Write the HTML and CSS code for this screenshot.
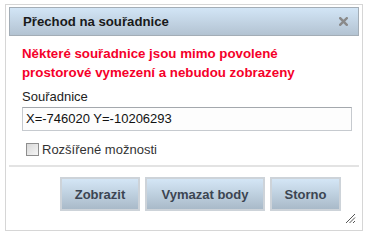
FILE: index.html
```html
<!DOCTYPE html>
<html lang="cs">
<head>
<meta charset="utf-8">
<title>Přechod na souřadnice</title>
<link rel="stylesheet" href="styles.css">
</head>
<body>
<div class="dialog">
  <div class="titlebar">
    <span class="title">Přechod na souřadnice</span>
    <span class="close"><svg width="9" height="9" viewBox="0 0 9 9"><path d="M1.2 1.2 L7.8 7.8 M7.8 1.2 L1.2 7.8" stroke="#8a8a8a" stroke-width="2.4" stroke-linecap="square"/></svg></span>
  </div>
  <div class="content">
    <p class="warn">Některé souřadnice jsou mimo povolené<br>prostorové vymezení a nebudou zobrazeny</p>
    <div class="lbl">Souřadnice</div>
    <div class="coords">X=-746020 Y=-10206293</div>
    <div class="chk"><span class="box"></span><span>Rozšířené možnosti</span></div>
  </div>
  <div class="buttons">
    <span class="btn btn-show">Zobrazit</span>
    <span class="btn btn-clear">Vymazat body</span>
    <span class="btn btn-cancel">Storno</span>
  </div>
  <span class="grip"><svg width="11" height="11" viewBox="0 0 11 11"><path d="M10 1 L1 10 M10 4.5 L4.5 10 M10 8 L8 10" stroke="#555" stroke-width="1"/></svg></span>
</div>
</body>
</html>
```
FILE: styles.css
```css
html, body {
  margin: 0;
  padding: 0;
  background: #ffffff;
}
body {
  font-family: "Liberation Sans", Arial, sans-serif;
  width: 370px;
  height: 234px;
  overflow: hidden;
}
.dialog {
  position: relative;
  box-sizing: border-box;
  margin: 4px 0 0 5px;
  width: 358px;
  height: 227px;
  border: 1px solid #d6d6d6;
  padding: 2px 3px 3px 3px;
  background: #ffffff;
}
.titlebar {
  box-sizing: border-box;
  height: 29px;
  border: 1px solid #a3adb6;
  background: linear-gradient(#d2e5f6, #b3c3d2);
  display: flex;
  align-items: center;
  justify-content: space-between;
  padding: 0 10px 0 13px;
}
.title {
  font-weight: bold;
  font-size: 13.2px;
  color: #1a1a1a;
}
.close {
  display: flex;
  width: 9px;
  height: 9px;
}
.content {
  padding: 8px 0 0 13px;
}
.warn {
  margin: 0;
  color: #f5002a;
  font-weight: bold;
  font-size: 13.3px;
  line-height: 19px;
}
.lbl {
  margin-top: 7px;
  font-size: 13px;
  line-height: 16px;
  color: #222;
}
.coords {
  box-sizing: border-box;
  margin-top: 2px;
  width: 330px;
  height: 24px;
  border: 1px solid #c6cacf;
  border-top-color: #a4a8ad;
  padding: 0 0 0 3px;
  font-size: 13px;
  line-height: 22px;
  color: #111;
  background: #fdfdfd;
}
.chk {
  display: flex;
  align-items: center;
  margin-top: 11px;
  padding-left: 4px;
  font-size: 13px;
  color: #333;
  gap: 3px;
}
.box {
  box-sizing: border-box;
  width: 13px;
  height: 13px;
  border: 1px solid #8e8e8e;
  background: linear-gradient(135deg, #d8d8d8, #f6f6f6);
}
.buttons {
  margin-top: 8px;
  border-top: 2px solid #e3e3e3;
  display: flex;
  justify-content: flex-end;
  gap: 5px;
  padding: 10px 18px 0 0;
}
.btn {
  box-sizing: border-box;
  height: 34px;
  display: flex;
  align-items: center;
  justify-content: center;
  border: 2px solid #cdd3d9;
  background: linear-gradient(#d4e6f6, #a9bac9);
  font-weight: bold;
  font-size: 13px;
  color: #3c4552;
}
.btn-show { width: 80px; }
.btn-clear { width: 120px; }
.btn-cancel { width: 71px; }
.grip {
  position: absolute;
  right: 6px;
  bottom: 6px;
  display: flex;
}
```
